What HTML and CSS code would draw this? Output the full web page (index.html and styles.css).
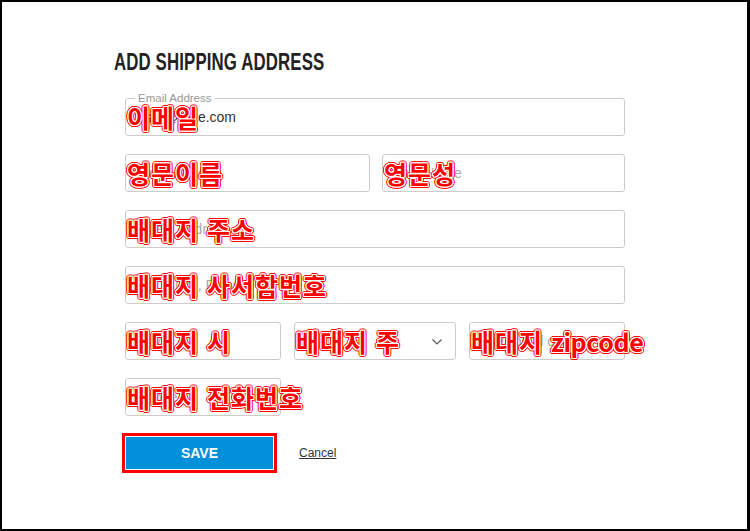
FILE: index.html
```html
<!DOCTYPE html>
<html lang="ko">
<head>
  <meta charset="UTF-8">
  <title>Add Shipping Address</title>
  <meta name="viewport" content="width=device-width, initial-scale=1.0" />
  <link rel="stylesheet" href="styles.css">
</head>
<body>
  <div class="frame">
    <h1 class="title"><span>ADD SHIPPING ADDRESS</span></h1>

    <form class="form">
      <div class="row">
        <div class="field">
          <span class="legend">Email Address</span>
          <span class="value">user@gate.com</span>
          <span class="note">이메일</span>
        </div>
      </div>

      <div class="row two">
        <div class="field">
          <span class="placeholder">First Name</span>
          <span class="note">영문이름</span>
        </div>
        <div class="field">
          <span class="placeholder">Last Name</span>
          <span class="note">영문성</span>
        </div>
      </div>

      <div class="row">
        <div class="field">
          <span class="placeholder">Street Address</span>
          <span class="note">배대지 주소</span>
        </div>
      </div>

      <div class="row">
        <div class="field">
          <span class="placeholder">Apt, Suite, Floor</span>
          <span class="note">배대지 사서함번호</span>
        </div>
      </div>

      <div class="row three">
        <div class="field">
          <span class="placeholder">City</span>
          <span class="note">배대지 시</span>
        </div>
        <div class="field select">
          <span class="placeholder">State</span>
          <svg class="chevron" width="10" height="6" viewBox="0 0 10 6"><path d="M0.5 0.5 L5 5 L9.5 0.5" fill="none" stroke="#555" stroke-width="1.2"/></svg>
          <span class="note">배대지 주</span>
        </div>
        <div class="field">
          <span class="placeholder">Zip/Postal code</span>
          <span class="note">배대지&nbsp;<span class="latin">zipcode</span></span>
        </div>
      </div>

      <div class="row one">
        <div class="field">
          <span class="placeholder">Phone</span>
          <span class="note">배대지 전화번호</span>
        </div>
      </div>

      <div class="actions">
        <button type="button" class="save">SAVE</button>
        <a href="#" class="cancel">Cancel</a>
      </div>
    </form>
  </div>
</body>
</html>
```

FILE: styles.css
```css
html, body { margin: 0; padding: 0; background: #fff; }
body { font-family: "Liberation Sans", Arial, sans-serif; color: #333; }

.frame { box-sizing: border-box; width: 750px; height: 531px; border: 2px solid #000; border-right-width: 3px; padding: 46px 0 0 112px; }

.title { margin: 0; font-size: 24px; line-height: 28px; font-weight: bold; color: #222; height: 28px; }
.title span { display: inline-block; transform: scaleX(0.70); transform-origin: left center; white-space: nowrap; letter-spacing: 0.2px; }

.form { width: 500px; margin: 22px 0 0 11px; display: flex; flex-direction: column; gap: 18px; }
.row { display: grid; grid-template-columns: 500px; }
.row.two { grid-template-columns: 245px 243px; column-gap: 12px; }
.row.three { grid-template-columns: 156px 162px 156px; column-gap: 13px; }
.row.one { grid-template-columns: 156px; }

.field { position: relative; box-sizing: border-box; height: 38px; border: 1px solid #ccc; border-radius: 3px; display: flex; align-items: center; padding-left: 11px; font-size: 14px; background: #fff; }
.value { color: #333; }
.placeholder { color: #aaa; white-space: nowrap; overflow: hidden; }
.legend { position: absolute; top: -8px; left: 9px; padding: 0 3px; background: #fff; font-size: 11.5px; line-height: 14px; color: #999; }
.chevron { position: absolute; right: 13px; top: 16px; }

.note {
  position: absolute; left: 1px; top: 0; bottom: 0;
  display: flex; align-items: center;
  white-space: nowrap;
  font-family: "Noto Sans CJK KR", "Noto Sans", sans-serif;
  font-weight: bold; font-size: 25px; letter-spacing: 1px; color: #ff0000;
  text-shadow:
    1px 0 #fff, -1px 0 #fff, 0 1px #fff, 0 -1px #fff,
    1px 1px #fff, -1px -1px #fff, 1px -1px #fff, -1px 1px #fff,
    2px 0 #f00, -2px 0 #f00, 0 2px #f00, 0 -2px #f00,
    2px 1px #f00, -2px -1px #f00, 2px -1px #f00, -2px 1px #f00,
    1px 2px #f00, -1px -2px #f00, 1px -2px #f00, -1px 2px #f00;
}
.note .latin { letter-spacing: -0.4px; }

.actions { display: flex; align-items: center; gap: 26px; margin-top: 3px; padding-left: 1px; }
.save { width: 147px; height: 32px; border: none; border-radius: 0; background: #0290db; color: #fff; font-family: "Liberation Sans", Arial, sans-serif; font-weight: bold; font-size: 14px; outline: 3px solid #f00; outline-offset: 1px; cursor: pointer; }
.cancel { color: #333; font-size: 12px; text-decoration: underline; }
```
